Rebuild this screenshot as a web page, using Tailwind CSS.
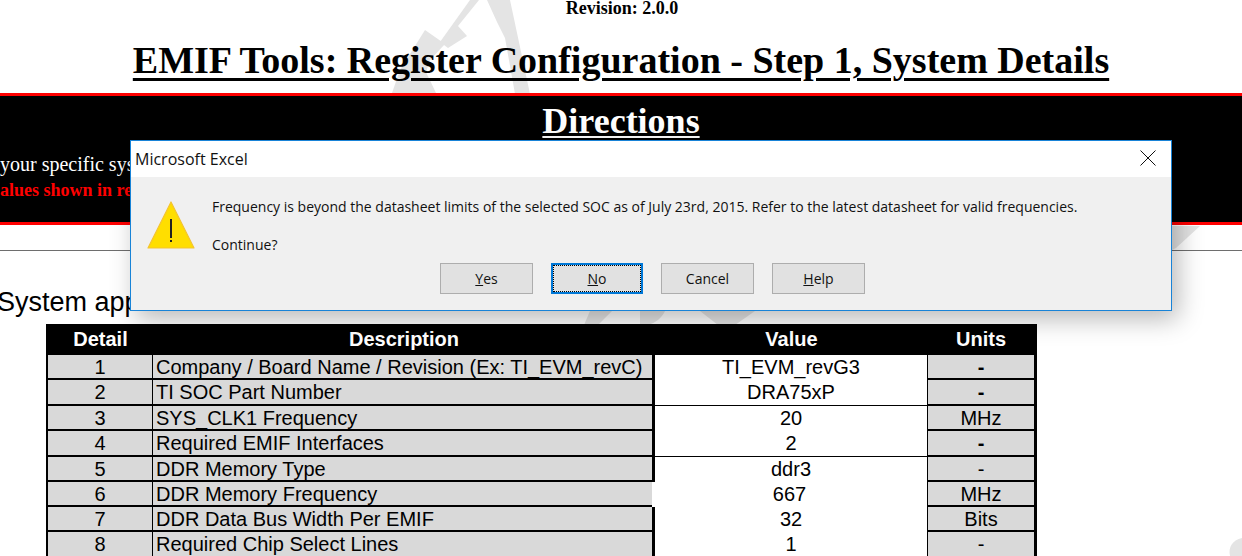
<!DOCTYPE html>
<html>
<head>
<meta charset="utf-8">
<script src="https://cdn.jsdelivr.net/npm/@tailwindcss/browser@4"></script>
</head>
<body class="bg-white">
<div class="relative w-[1242px] h-[556px] overflow-hidden bg-white font-['Liberation_Serif',serif] text-black">

  <!-- watermark -->
  <svg class="absolute left-0 top-0 z-0" width="1242" height="556" viewBox="0 0 1242 556" fill="#e4e4e4">
    <polygon points="440,42 470,0 479,0 458,26 467,36 448,48"/>
    <polygon points="487,0 510,0 530,94 515,94 505,38 497,22"/>
    <path d="M425,30 L445,44 L430,60 L426,72 L436,93 L392,93 L400,70 Z" transform="translate(0,0)"/>
    <polygon points="1172,226 1200,226 1176,248 1172,250"/>
    <polygon points="590,311 612,311 598,325 584,325"/>
    <path d="M640,311 L665,311 C662,318 655,323 648,325 L640,325 Z"/>
    <polygon points="700,311 755,311 735,325 718,325"/>
    <polygon points="658,405 680,386 664,410 658,414"/>
    <path d="M1242,538 C1232,540 1228,548 1230,556 L1242,556 Z"/>
  </svg>

  <!-- sheet content -->
  <div class="relative z-10 flex flex-col">
    <div class="h-[16px] text-center font-bold text-[18px] leading-[16px] pl-[2px] text-black">Revision: 2.0.0</div>

    <h1 class="mt-[22px] h-[55px] text-center font-bold text-[38px] leading-[44px] underline decoration-[3px] underline-offset-[5px]">EMIF Tools: Register Configuration - Step 1, System Details</h1>

    <div class="h-[132px] bg-black border-y-[3px] border-[#ff0000] text-white relative overflow-hidden">
      <div class="text-center font-bold text-[36px] leading-[44px] underline decoration-[2px] underline-offset-[3px] pt-[3px] pl-[-1px]">Directions</div>
      <div class="mt-[8px] text-[20px] leading-[26px] whitespace-nowrap">your specific system</div>
      <div class="text-[18px] leading-[26px] font-bold text-[#ff0000] whitespace-nowrap">alues shown in red</div>
    </div>

    <div class="mt-[25px] h-px bg-[#6e6e6e]"></div>

    <div class="mt-[34px] -ml-[3px] h-[40px] font-['Liberation_Sans',sans-serif] text-[27px] leading-[34px] whitespace-nowrap">System application</div>

    <!-- table -->
    <div class="-mt-[1px] ml-[46px] w-[991px] bg-black pl-[2px] pr-[3px] font-['Liberation_Sans',sans-serif] text-[20px] leading-[25px]">
      <div class="grid grid-cols-[105px_502px_273px_106px] h-[31px] items-center text-white font-bold text-center">
        <div>Detail</div><div>Description</div><div>Value</div><div>Units</div>
      </div>
      <div class="grid grid-cols-[105px_502px_273px_106px] h-[25px] bg-[#d9d9d9] border-b-2 border-black"><div class="text-center border-r border-black">1</div><div class="pl-[3px] border-r-[3px] border-black">Company / Board Name / Revision (Ex: TI_EVM_revC)</div><div class="bg-white text-center border-r border-black">TI_EVM_revG3</div><div class="text-center font-bold">-</div></div>
      <div class="grid grid-cols-[105px_502px_273px_106px] h-[26px] bg-[#d9d9d9] border-b-2 border-black"><div class="text-center border-r border-black">2</div><div class="pl-[3px] border-r-[3px] border-black">TI SOC Part Number</div><div class="bg-white text-center border-r border-black">DRA75xP</div><div class="text-center font-bold">-</div></div>
      <div class="grid grid-cols-[105px_502px_273px_106px] h-[25px] bg-[#d9d9d9] border-b-2 border-black"><div class="text-center border-r border-black">3</div><div class="pl-[3px] border-r-[3px] border-black">SYS_CLK1 Frequency</div><div class="bg-white text-center border-r border-black">20</div><div class="text-center">MHz</div></div>
      <div class="grid grid-cols-[105px_502px_273px_106px] h-[26px] bg-[#d9d9d9] border-b-2 border-black"><div class="text-center border-r border-black">4</div><div class="pl-[3px] border-r-[3px] border-black">Required EMIF Interfaces</div><div class="bg-white text-center border-r border-black">2</div><div class="text-center font-bold">-</div></div>
      <div class="grid grid-cols-[105px_502px_273px_106px] h-[25px] bg-[#d9d9d9] border-b-2 border-black"><div class="text-center border-r border-black">5</div><div class="pl-[3px] border-r-[3px] border-black">DDR Memory Type</div><div class="bg-white text-center border-r border-black">ddr3</div><div class="text-center">-</div></div>
      <div class="grid grid-cols-[105px_502px_273px_106px] h-[25px] bg-[#d9d9d9] border-b-2 border-black"><div class="text-center border-r border-black">6</div><div class="pl-[3px]">DDR Memory Frequency</div><div class="-ml-[3px] bg-white text-center border-r border-black">667</div><div class="text-center">MHz</div></div>
      <div class="grid grid-cols-[105px_502px_273px_106px] h-[25px] bg-[#d9d9d9] border-b-2 border-black"><div class="text-center border-r border-black">7</div><div class="pl-[3px] border-r-[3px] border-black">DDR Data Bus Width Per EMIF</div><div class="bg-white text-center border-r border-black">32</div><div class="text-center">Bits</div></div>
      <div class="grid grid-cols-[105px_502px_273px_106px] h-[25px] bg-[#d9d9d9]"><div class="text-center border-r border-black">8</div><div class="pl-[3px] border-r-[3px] border-black">Required Chip Select Lines</div><div class="bg-white text-center border-r border-black">1</div><div class="text-center">-</div></div>
    </div>
  </div>

  <!-- dialog -->
  <div class="absolute z-20 left-[130px] top-[140px] w-[1042px] h-[171px] border border-[#1883d7] bg-[#f0f0f0] shadow-[6px_8px_24px_rgba(0,0,0,0.28)] font-['Open_Sans',sans-serif] flex flex-col">
    <div class="h-[36px] bg-white flex items-center justify-between pl-[4px] pr-[15px] text-[16px] text-[#111]">
      <span>Microsoft Excel</span>
      <svg width="16" height="16" viewBox="0 0 16 16" class="mb-[2px]"><path d="M0.5 0.5 L15.5 15.5 M15.5 0.5 L0.5 15.5" stroke="#111" stroke-width="1" fill="none"/></svg>
    </div>
    <div class="flex pl-[16px] pt-[24px]">
      <svg width="48" height="48" viewBox="0 0 48 48" class="shrink-0">
        <path d="M24 1 L47 47 L1 47 Z" fill="#ffde00" stroke="#f4c430" stroke-width="1.2" stroke-linejoin="round"/>
        <rect x="23" y="18" width="2" height="19" fill="#222"/>
        <rect x="23" y="39" width="2" height="2" fill="#222"/>
      </svg>
      <div class="ml-[17px] -mt-[4px] text-[14px] leading-[20px] text-[#111] whitespace-nowrap">
        <div>Frequency is beyond the datasheet limits of the selected SOC as of July 23rd, 2015. Refer to the latest datasheet for valid frequencies.</div>
        <div class="mt-[18px]">Continue?</div>
      </div>
    </div>
    <div class="flex gap-[18px] ml-[309px] mt-[8px] text-[14px] text-[#111]">
      <div class="w-[93px] h-[31px] flex items-center justify-center bg-[#e1e1e1] border border-[#adadad]"><span><u>Y</u>es</span></div>
      <div class="w-[92px] h-[31px] flex items-center justify-center bg-[#e1e1e1] border-2 border-[#0078d7] outline-1 outline-dotted -outline-offset-3 outline-black"><span><u>N</u>o</span></div>
      <div class="w-[93px] h-[31px] flex items-center justify-center bg-[#e1e1e1] border border-[#adadad]">Cancel</div>
      <div class="w-[93px] h-[31px] flex items-center justify-center bg-[#e1e1e1] border border-[#adadad]"><span><u>H</u>elp</span></div>
    </div>
  </div>
</div>
</body>
</html>
